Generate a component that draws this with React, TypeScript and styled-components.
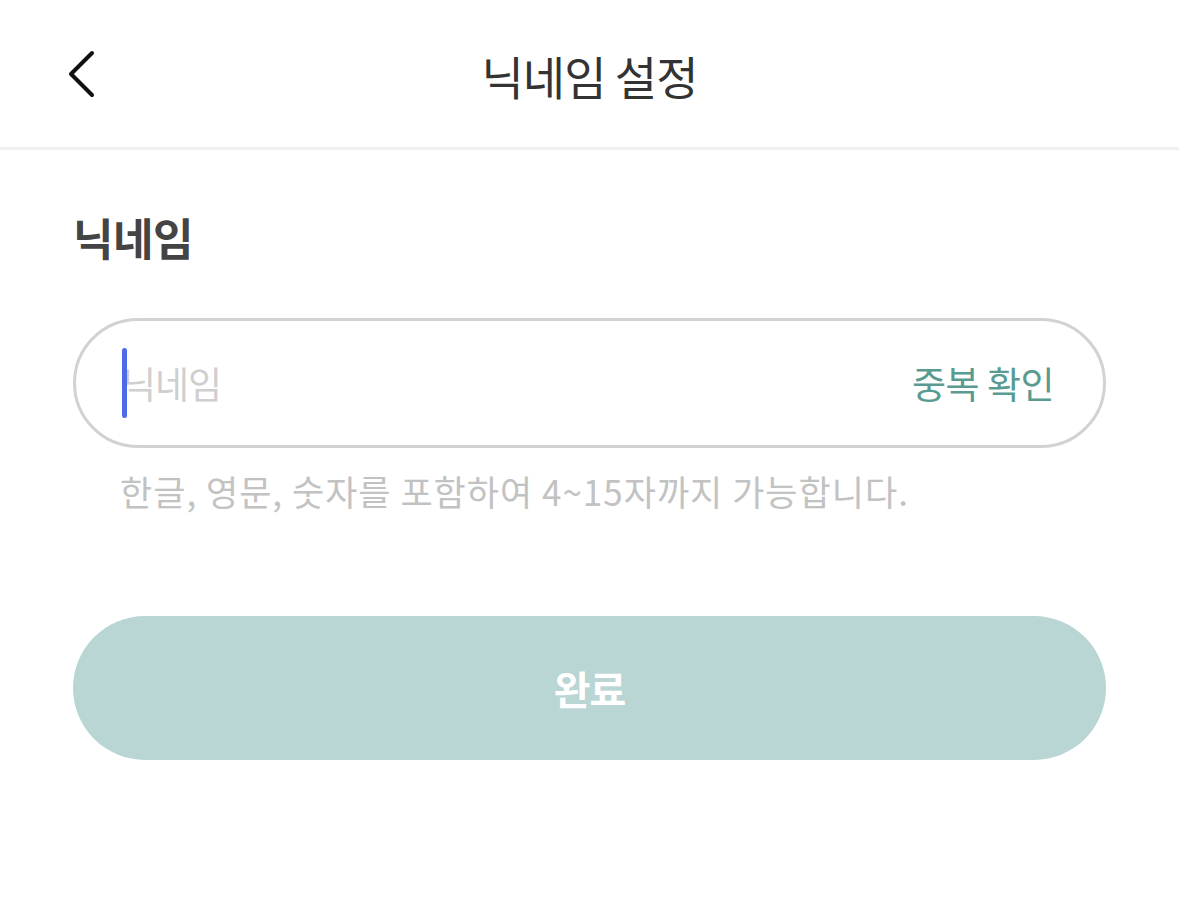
import React from "react";
import styled, { createGlobalStyle } from "styled-components";

const GlobalStyle = createGlobalStyle`
    html, body {
        margin: 0;
        padding: 0;
        background: #ffffff;
    }
    body {
        font-family: "Noto Sans CJK KR", "Noto Sans", sans-serif;
    }
`;

const StyledPage = styled.div`
    width: 1179px;
    min-height: 914px;
    display: flex;
    flex-direction: column;
`;

const StyledHeader = styled.header`
    height: 147px;
    display: grid;
    grid-template-columns: 147px 1fr 147px;
    align-items: center;
    border-bottom: 3px solid #f0f0f0;
`;

const StyledBackButton = styled.button`
    border: 0;
    background: none;
    padding: 0 0 0 66px;
    display: flex;
    align-items: center;
    height: 100%;
    cursor: pointer;
`;

const StyledTitle = styled.h1`
    margin: 0;
    text-align: center;
    font-size: 46px;
    font-weight: 400;
    color: #333333;
    letter-spacing: -1px;
    padding-top: 2px;
`;

const StyledMain = styled.main`
    padding: 52px 73px 0 73px;
    display: flex;
    flex-direction: column;
`;

const StyledLabel = styled.label`
    font-size: 44px;
    font-weight: 700;
    color: #444444;
    letter-spacing: -0.5px;
    line-height: 70px;
`;

const StyledInputBox = styled.div`
    position: relative;
    margin-top: 46px;
    height: 124px;
    border: 3px solid #d2d2d2;
    border-radius: 66px;
    display: flex;
    align-items: center;
    padding: 0 49px 0 46px;
`;

const StyledInput = styled.input`
    flex: 1;
    border: 0;
    outline: none;
    background: transparent;
    font-family: inherit;
    font-size: 37px;
    color: #333333;
    padding: 0;
    letter-spacing: -1px;

    &::placeholder {
        color: #cfcfcf;
    }
`;

const StyledCaret = styled.span`
    position: absolute;
    left: 46px;
    top: 27px;
    width: 5px;
    height: 70px;
    border-radius: 3px;
    background: #4f6ae8;
`;

const StyledCheckButton = styled.button`
    border: 0;
    background: none;
    padding: 0;
    font-family: inherit;
    font-size: 37px;
    color: #5a9b91;
    letter-spacing: -0.5px;
    cursor: pointer;
`;

const StyledHelp = styled.p`
    margin: 15px 0 0 47px;
    font-size: 35px;
    color: #c2c2c2;
    letter-spacing: 1px;
    line-height: 56px;
`;

const StyledSubmit = styled.button`
    margin-top: 97px;
    height: 144px;
    border: 0;
    border-radius: 72px;
    background: #b9d5d4;
    color: #ffffff;
    font-family: inherit;
    font-size: 40px;
    font-weight: 700;
    letter-spacing: -1px;
    cursor: pointer;
`;

const BackIcon = () =>
(
    <svg width="30" height="48" viewBox="0 0 30 48" fill="none">
        <path d="M26 3 L5 24 L26 45" stroke="#111111" strokeWidth="4" strokeLinecap="round" strokeLinejoin="round" />
    </svg>
);

const App = () =>
(
    <StyledPage>
        <GlobalStyle />
        <StyledHeader>
            <StyledBackButton aria-label="뒤로">
                <BackIcon />
            </StyledBackButton>
            <StyledTitle>닉네임 설정</StyledTitle>
            <div />
        </StyledHeader>
        <StyledMain>
            <StyledLabel htmlFor="nickname">닉네임</StyledLabel>
            <StyledInputBox>
                <StyledInput id="nickname" placeholder="닉네임" />
                <StyledCaret />
                <StyledCheckButton>중복 확인</StyledCheckButton>
            </StyledInputBox>
            <StyledHelp>한글, 영문, 숫자를 포함하여 4~15자까지 가능합니다.</StyledHelp>
            <StyledSubmit>완료</StyledSubmit>
        </StyledMain>
    </StyledPage>
);

export default App;
